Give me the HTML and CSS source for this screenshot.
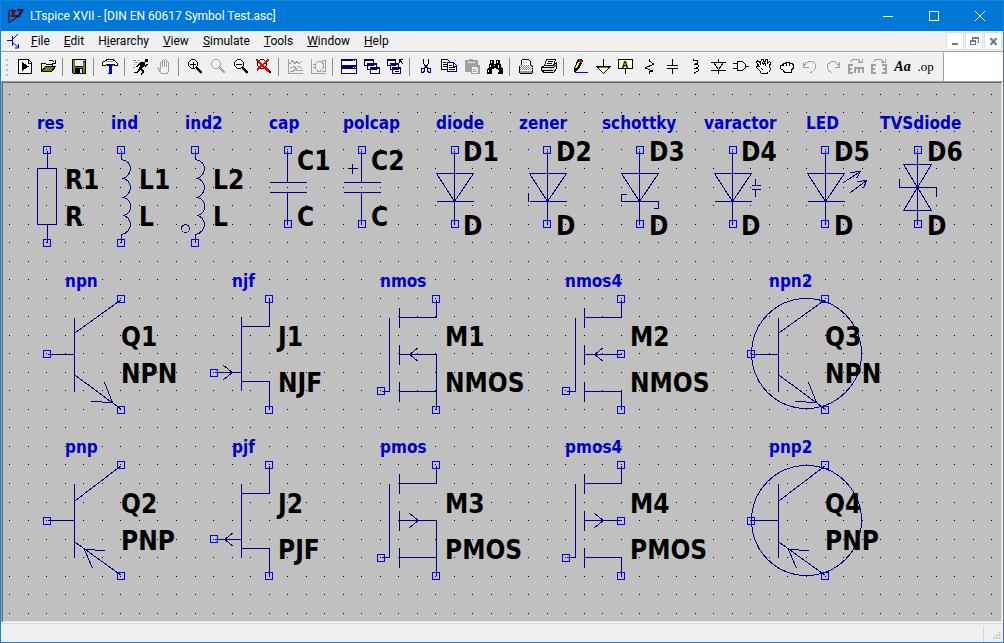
FILE: index.html
```html
<!DOCTYPE html>
<html lang="en">
<head>
<meta charset="utf-8">
<title>LTspice XVII - [DIN EN 60617 Symbol Test.asc]</title>
<link rel="stylesheet" href="styles.css">
</head>
<body>
<div class="window">
  <header class="titlebar">
    <svg class="app-icon" viewBox="0 0 16 16" aria-hidden="true">
      <path d="M1 2v13l9-7" fill="none" stroke="#001" stroke-width="1"/>
      <path d="M1 2l4 0" stroke="#001"/>
      <path d="M3 2h5l-2 5h4v2H3V8l1-2zM9 1h7l-1 2h-1l-2 6h-2l2-6H9z" fill="#700010"/>
      <path d="M8 8l2 1 5-7" fill="none" stroke="#001"/>
    </svg>
    <h1 class="title">LTspice XVII - [DIN EN 60617 Symbol Test.asc]</h1>
    <div class="caption-buttons">
      <button aria-label="Minimize"><svg viewBox="0 0 11 11"><path d="M1 5.500h10"/></svg></button>
      <button aria-label="Maximize"><svg viewBox="0 0 11 11"><path d="M1.500 .5h9v9h-9z"/></svg></button>
      <button aria-label="Close"><svg class="smooth" viewBox="0 0 11 11"><path d="M1 0l10 10M11 0L1 10"/></svg></button>
    </div>
  </header>

  <nav class="menubar" aria-label="Main menu">
    <svg class="doc-icon" viewBox="0 0 16 16" aria-hidden="true"><path d="M1 7.500h5M6.500 3v10M7 6l5-5M7 10l5 4M12.500 11v4H9"/></svg>
    <button><u>F</u>ile</button>
    <button><u>E</u>dit</button>
    <button>H<u>i</u>erarchy</button>
    <button><u>V</u>iew</button>
    <button><u>S</u>imulate</button>
    <button><u>T</u>ools</button>
    <button><u>W</u>indow</button>
    <button><u>H</u>elp</button>
    <div class="child-buttons">
      <button aria-label="Minimize document"><svg viewBox="0 0 16 16"><path d="M5 10h6v2H5z"/></svg></button>
      <button aria-label="Restore document"><svg viewBox="0 0 16 16"><path d="M6 4h7v6h-2V9h1V6H7v1H6zM4 7h6v5H4zM5 9v2h4V9z" fill-rule="evenodd"/></svg></button>
      <button aria-label="Close document"><svg viewBox="0 0 16 16"><path d="M5 5h2l1.500 2L10 5h2v1L10 8.500 12 11v1h-2L8.500 10 7 12H5v-1l2-2.500L5 6z"/></svg></button>
    </div>
  </nav>

  <div class="toolstrip">
    <div class="toolbar" role="toolbar" aria-label="Schematic tools">
      <span class="grip"></span>
      <button aria-label="New schematic"><svg viewBox="0 0 16 16"><path d="M1.500 .5h10l3 3v11h-13z" fill="#fff" stroke="#000"/><path d="M11 1v3h3" fill="none" stroke="#000"/><path d="M5 3l7 4.500L5 12z"/></svg></button>
      <button aria-label="Open"><svg viewBox="0 0 16 16"><path d="M1.500 12.500v-8h4l1 1h6v3" fill="#ffff80" stroke="#000"/><path d="M1.500 12.500l4-5h10l-4 5z" fill="#808000" stroke="#000"/><path d="M9 2l2-1 2 1 1 1M12 4h3V1" fill="none" stroke="#000"/></svg></button>
      <i class="sep"></i>
      <button aria-label="Save"><svg viewBox="0 0 16 16"><path d="M1 0h14v15H2l-1-1z"/><path d="M2 1h2v7h8V3h2v11H2z" fill="#808000"/><path d="M4 1h8v6H4z" fill="#efefef"/><path d="M12 1h2v1h-2z" fill="#ddd"/><path d="M4 9h8v5H4z"/><path d="M9 10h2v4H9z" fill="#efefef"/></svg></button>
      <i class="sep"></i>
      <button aria-label="Control panel"><svg viewBox="0 0 16 16"><path d="M3.500 1.500l2-1h5l2 1 3 3v2h-2l-2-1h-2v1h-4v-1h-1l-1 1h-3v-3z" fill="#fff" stroke="#000"/><path d="M4 2.500h7" stroke="#888"/><path d="M6 5h5v2h-1v8H6v-1h1V7H6z" fill="#000080"/><path d="M8 7h2v7H8z" fill="#00f"/></svg></button>
      <i class="sep"></i>
      <button aria-label="Run"><svg viewBox="0 0 16 16"><path d="M12 0h3v3h-3zM7 3h5v3l2-1h1v1l-3 2-1-1-2 3 2 1v2l-2 3H8l1-4-2-1-3 3H1v-1h3l3-6-1-1-2 2H3l2-3z"/><path d="M0 1h3M2 3h3M1 5h1M0 8h2M5 1h1" stroke="#888"/></svg></button>
      <button aria-label="Halt"><svg viewBox="0 0 16 16"><path class="off" d="M5.500 14.500l-4-5 1-1 2 1.500V3.500l1-1 1 1V8V1.500l1-1 1 1V8V1.500l1-1 1 1V8V3.500l1-1 1 1v8l-1 3z"/></svg></button>
      <i class="sep"></i>
      <button aria-label="Zoom in"><svg viewBox="0 0 16 16"><path class="lens" d="M4.500 .5h3l3 3v3l-3 3h-3l-3-3v-3z"/><path d="M3 5.500h6M6 3v6" stroke="#000"/><path d="M9 8l6 6" stroke="#000" stroke-width="2"/><path d="M9 10l5 5" stroke="#888"/></svg></button>
      <button aria-label="Pan"><svg viewBox="0 0 16 16"><path class="off" d="M4.500 .5h3l3 3v3l-3 3h-3l-3-3v-3z"/><path d="M9 8l6 6" stroke="#a0a0a0" stroke-width="2"/></svg></button>
      <button aria-label="Zoom out"><svg viewBox="0 0 16 16"><path class="lens" d="M4.500 .5h3l3 3v3l-3 3h-3l-3-3v-3z"/><path d="M3 5.500h6" stroke="#000"/><path d="M9 8l6 6" stroke="#000" stroke-width="2"/><path d="M9 10l5 5" stroke="#888"/></svg></button>
      <button aria-label="Zoom to fit"><svg viewBox="0 0 16 16"><path class="lens" d="M4.500 .5h3l3 3v3l-3 3h-3l-3-3v-3z"/><path d="M9 8l6 6" stroke="#000" stroke-width="2"/><path d="M0 0l13 13M13 0L1 11" stroke="#f00" stroke-width="2"/></svg></button>
      <i class="sep"></i>
      <button aria-label="Autorange"><svg viewBox="0 0 16 16"><path class="off" d="M1.500 0v14.500H16M1 4.500h2l2-3 3 3 2-2 2 2 3-2M3 8.500h2l2-1 2 2 3-2 3 2M3 12.500h3l2-2 3 1h5"/></svg></button>
      <button aria-label="Plot limits"><svg viewBox="0 0 16 16"><path class="off" d="M1.500 0v14.500H16M5.500 5l2-3h3l3 3v3l-3 4h-3l-2-3zM3 5.500h3M3 8.500h3M12 1.500h3.500v11H12"/></svg></button>
      <i class="sep"></i>
      <button aria-label="Tile"><svg viewBox="0 0 16 16"><g class="win"><path d="M.5 .5h15v6H.5zM.5 8.500h15v6H.5z"/></g><path d="M0 0h16v2H0zM0 7h16v3H0z" fill="#000080"/><path d="M12 1h1v1h-1zM14 1h1v1h-1zM12 8h1v1h-1zM14 8h1v1h-1z" fill="#fff"/></svg></button>
      <button aria-label="Cascade"><svg viewBox="0 0 16 16"><g class="win"><path d="M.5 .5h9v6h-9zM3.500 4.500h9v6h-9zM6.500 8.500h9v6h-9z"/></g><path d="M0 0h10v2H0zM3 4h10v2H3zM6 8h10v2H6z" fill="#000080"/></svg></button>
      <button aria-label="Close all"><svg viewBox="0 0 16 16"><g class="win"><path d="M.5 .5h8v6h-8zM3.500 4.500h8v6h-8zM5.500 8.500h8v6h-8z"/></g><path d="M0 0h9v2H0zM3 4h9v2H3zM5 8h9v2H5zM8 12h4v1H8z" fill="#000080"/><path d="M12 .5h4M12.500 0v4M12 0l4 5" fill="none" stroke="#000"/></svg></button>
      <i class="sep"></i>
      <button aria-label="Cut"><svg viewBox="0 0 16 16"><path d="M5.500 0v4l3 5M10.500 0v4l-3 5" fill="none" stroke="#000"/><path d="M7 8l-1.500 1.500h-2v4h2l1-2V9M9 8l1.500 1.500h2v4h-2l-1-2V9" fill="none" stroke="#000080"/></svg></button>
      <button aria-label="Copy"><svg viewBox="0 0 16 16"><path d="M.5 .5h6l2 2v8h-8z" fill="#fff" stroke="#000"/><path d="M2 3.500h3M2 5.500h4M2 7.500h4" stroke="#000"/><path d="M6.500 3.500h6l3 3v6h-9z" fill="#fff" stroke="#000080"/><path d="M8 6.500h3M8 8.500h6M8 10.500h6M12 4v3h3" fill="none" stroke="#000080"/></svg></button>
      <button aria-label="Paste"><svg viewBox="0 0 16 16"><path d="M1 1h4V0h4v1h5v5h2v9H7v-2H1z" fill="#a0a0a0"/><path d="M8 8h5v1h1v5H8z" fill="#efefef"/><path d="M4 3.500h7" stroke="#efefef"/><path d="M9 10.500h3M9 12.500h4" stroke="#a0a0a0"/></svg></button>
      <button aria-label="Find"><svg viewBox="0 0 16 16"><path d="M3 1h4v4h2V1h4v3l1 2v2l2 2v5h-5v-5H9V9H7v1H5v5H0v-5l2-2V6l1-2z"/><path d="M4.500 2v2M3.500 6v2M1.500 11v2M10.500 2v2M11.500 6v3M7.500 6v1M11.500 11v2" stroke="#fff"/></svg></button>
      <i class="sep"></i>
      <button aria-label="Print preview"><svg viewBox="0 0 16 16"><path d="M3.500 5.500v-4l1-1h6l2 2v3l2 2v5l-1 2h-11l-1-2v-5z" fill="#fff" stroke="#000"/><path d="M5 3.500h1M8 3.500h1" stroke="#888"/><path d="M2 6.500h13M2 8.500h13M2 10.500h13" stroke="#888" stroke-dasharray="1 1"/><path d="M3 7.500h11M3 9.500h11" stroke="#888" stroke-dasharray="1 1"/><path d="M2 12h12v2H2z" fill="#999"/></svg></button>
      <button aria-label="Print"><svg viewBox="0 0 16 16"><path d="M5.500 .5h9l-2 6h-9z" fill="#fff" stroke="#000"/><path d="M7 2.500h5M6 4.500h5" stroke="#000"/><path d="M.5 8.500l3-2h9l3-3v6l-3 4H3l-2.500-2z" fill="#ddd" stroke="#000"/><path d="M1 8.500h11M12 9l3-3M1 11.500h11" stroke="#000"/><path d="M9 10.500h2" stroke="#dd0"/></svg></button>
      <i class="sep"></i>
      <button aria-label="Wire"><svg viewBox="0 0 16 16"><path d="M6 0h3l2 2-4 8-4 3H2V9z"/><path d="M7 3L4 9" stroke="#ff0" stroke-width="2"/><path d="M7 1l3 2" stroke="#f00" stroke-width="2"/><path d="M3 13.500h13" stroke="#00f"/></svg></button>
      <button aria-label="Ground"><svg viewBox="0 0 16 16"><path d="M2.500 8.500h12l-6 6z" fill="#ffffd0" stroke="#000"/><path d="M8.500 0v8M1 7.500h15" stroke="#000"/><path d="M4 8.500h9" stroke="#808000"/></svg></button>
      <button aria-label="Label net"><svg viewBox="0 0 16 16"><path d="M.5 .5h14v9H.5z" fill="#ffffc0" stroke="#000"/><path d="M7.500 10v5" stroke="#000"/><text x="4" y="9" class="net-label">A</text></svg></button>
      <button aria-label="Resistor"><svg viewBox="0 0 16 16"><path class="ink" d="M8 0v2l5 3-9 4 8 3-4 1v2"/></svg></button>
      <button aria-label="Capacitor"><svg viewBox="0 0 16 16"><path class="ink" d="M8.500 0v6M3 6.500h11M3 9.500h11M8.500 10v5"/></svg></button>
      <button aria-label="Inductor"><svg viewBox="0 0 16 16"><path class="ink" d="M6.500 0v1h2l2 1v2l-2 1H7h2l2 1v2l-2 1H7h2l2 1v2l-2 1h-2v2"/></svg></button>
      <button aria-label="Diode"><svg viewBox="0 0 16 16"><path d="M3.500 3.500h10l-5 7z" fill="#e8e8d0" stroke="#000"/><path class="ink" d="M8.500 0v3M1 3.500h15M1 11.500h15M8.500 11v4"/></svg></button>
      <button aria-label="Component"><svg viewBox="0 0 16 16"><path class="ink" d="M4.500 2.500h5l3 3v3l-3 3h-5zM0 4.500h4M0 9.500h4M12 7.500h4"/></svg></button>
      <button aria-label="Move"><svg viewBox="0 0 16 16"><path class="hand" d="M5.500 14.500l-2-3-3-3 1-2 2 1-3-4 1-2 3 2 1-3h2l1 4 1-4h2l0 4 2-2 1 1-1 4 1 3-2 3-2 1z"/><path class="ink" d="M3.500 3.500l2 3M6.500 3l1 3M9.500 3.500v3M5 9l2 2"/></svg></button>
      <button aria-label="Drag"><svg viewBox="0 0 16 16"><path class="hand" d="M5.500 13.500l-1-2-3-2V7l2-1 1-2h2l1-1h2l1 1h2l2 2v3l-2 2v2.500z"/><path class="ink" d="M4.500 4v3M7.500 4v3M10.500 4v3"/></svg></button>
      <button aria-label="Undo"><svg viewBox="0 0 16 16"><path class="off" d="M1.500 3v5h5M1.500 7.500l3-4 3-1h3l3 3v4l-3 3-2 1"/></svg></button>
      <button aria-label="Redo"><svg viewBox="0 0 16 16"><path class="off" d="M14.500 3v5h-5M14.500 7.500l-3-4-3-1h-2l-4 3v4l2 3 3 1"/></svg></button>
      <button aria-label="Rotate"><svg viewBox="0 0 16 16"><path class="off2" d="M5 6H1v8h4M1 10h3M7 14V9h9M11 9v5M15 9v5"/><path class="off" d="M2 3l3-2.500h5l3 3M10 3.500h4V0"/></svg></button>
      <button aria-label="Mirror"><svg viewBox="0 0 16 16"><path class="off2" d="M5 6H1v8h4M1 10h3M11 6h4v8h-4M12 10h3"/><path class="off" d="M2 3l3-2.500h5l3 3M10 3.500h4V0"/></svg></button>
      <button class="text-tool" aria-label="Text">Aa</button>
      <button class="op-tool" aria-label="SPICE directive">.op</button>
    </div>
  </div>

  <main class="sheet">
    <svg class="schematic" role="img" aria-label="Symbol test schematic">
      <defs>
        <g id="pin"><path class="pin" d="M-4-4h7v7h-7z"/></g>
        <g id="diode"><path d="M0 0V74M-18 23h37L0 51zM-18 51h37M-1 49h2M-1 50h2"/></g>
        <g id="coil"><path d="M0 0v9C6 10 9 14 9 18S6 27 1 28C6 28 9 33 9 37S6 46 1 47C6 47 9 51 9 56S6 65 1 65C6 65 9 70 9 74S6 83 0 84v8"/></g>
        <g id="npn"><path d="M0 55h27M27 18v74M28 33L74 0M28 76l46 34M65 103l-21-1M65 103l-8-20"/></g>
        <g id="pnp"><path d="M0 55h27M27 18v74M28 35L74 0M28 77l46 33M37 84l21 1M37 84l8 19"/></g>
        <g id="jfet"><path d="M27 18v74M27 28h28V0M27 83h28v27M0 74h27"/></g>
        <g id="mos"><path d="M18 8v20M18 45v20M18 82v20M18 18h37V0M18 55h37M18 92h37v18"/></g>
      </defs>
      <g transform="translate(-3 -83)">
        <path id="grid" class="grid"/>
        <g class="symbols" transform="translate(.5 .5)">
          <path d="M47 150v18M37 168h19v56H37zM47 224v18"/>
          <use href="#coil" x="121" y="150"/>
          <use href="#coil" x="195" y="150"/><circle cx="185" cy="228" r="4"/>
          <path d="M287 150v32M269 182h37M269 192h37M287 192v32"/>
          <path d="M361 150v32M343 182h37M343 192h37M361 192v32M347 168h10M352 163v10"/>
          <use href="#diode" x="454" y="150"/>
          <use href="#diode" x="547" y="150"/><path d="M528 192v9"/>
          <use href="#diode" x="639" y="150"/><path d="M626 194h-5v7M658 201v7h-5"/>
          <use href="#diode" x="732" y="150"/><path d="M751 185h9M751 189h9M755 178v7M755 189v7"/>
          <use href="#diode" x="825" y="150"/><path d="M843 182l17-11M850 172l10-1-4 7M850 192l16-12M857 181l9-1-3 8"/>
          <path d="M917 150v74M903 164h28l-28 46h28zM899 178v9h37v9M916 186h2M916 188h2"/>
          <use href="#npn" x="47" y="299"/>
          <use href="#jfet" x="214" y="298"/><path d="M223 365l9 7-9 7"/>
          <use href="#mos" x="381" y="299"/><path d="M381 391h8V317M436 354v38M418 347l-9 7 9 7"/>
          <use href="#mos" x="566" y="299"/><path d="M566 391h9V317M603 347l-9 7 9 7"/>
          <use href="#npn" x="751" y="299"/><circle cx="806" cy="353" r="55"/>
          <use href="#pnp" x="47" y="465"/>
          <use href="#jfet" x="214" y="465"/><path d="M233 532l-9 7 9 7"/>
          <use href="#mos" x="381" y="465"/><path d="M381 557h8V483M436 520v38M409 513l9 7-9 7"/>
          <use href="#mos" x="566" y="465"/><path d="M566 557h9V483M594 513l9 7-9 7"/>
          <use href="#pnp" x="751" y="465"/><circle cx="806" cy="520" r="55"/>
        </g>
        <g class="symbols" transform="translate(.5 .5)">
          <use href="#pin" x="47" y="150"/><use href="#pin" x="47" y="243"/>
          <use href="#pin" x="121" y="150"/><use href="#pin" x="121" y="243"/>
          <use href="#pin" x="195" y="150"/><use href="#pin" x="195" y="243"/>
          <use href="#pin" x="288" y="150"/><use href="#pin" x="288" y="224"/>
          <use href="#pin" x="362" y="150"/><use href="#pin" x="362" y="224"/>
          <use href="#pin" x="455" y="150"/><use href="#pin" x="455" y="224"/>
          <use href="#pin" x="547" y="150"/><use href="#pin" x="547" y="224"/>
          <use href="#pin" x="640" y="150"/><use href="#pin" x="640" y="224"/>
          <use href="#pin" x="733" y="150"/><use href="#pin" x="733" y="224"/>
          <use href="#pin" x="825" y="150"/><use href="#pin" x="825" y="224"/>
          <use href="#pin" x="918" y="150"/><use href="#pin" x="918" y="224"/>
          <use href="#pin" x="121" y="299"/><use href="#pin" x="47" y="354"/><use href="#pin" x="121" y="410"/>
          <use href="#pin" x="269" y="299"/><use href="#pin" x="214" y="373"/><use href="#pin" x="269" y="410"/>
          <use href="#pin" x="436" y="299"/><use href="#pin" x="381" y="391"/><use href="#pin" x="436" y="410"/>
          <use href="#pin" x="621" y="299"/><use href="#pin" x="621" y="354"/><use href="#pin" x="566" y="391"/><use href="#pin" x="621" y="410"/>
          <use href="#pin" x="825" y="299"/><use href="#pin" x="751" y="354"/><use href="#pin" x="825" y="410"/>
          <use href="#pin" x="121" y="465"/><use href="#pin" x="47" y="521"/><use href="#pin" x="121" y="576"/>
          <use href="#pin" x="269" y="465"/><use href="#pin" x="214" y="539"/><use href="#pin" x="269" y="576"/>
          <use href="#pin" x="436" y="465"/><use href="#pin" x="381" y="558"/><use href="#pin" x="436" y="576"/>
          <use href="#pin" x="621" y="465"/><use href="#pin" x="621" y="521"/><use href="#pin" x="566" y="558"/><use href="#pin" x="621" y="576"/>
          <use href="#pin" x="825" y="465"/><use href="#pin" x="751" y="521"/><use href="#pin" x="825" y="576"/>
        </g>
        <g class="kind">
          <text x="37" y="129">res</text><text x="111" y="129">ind</text><text x="185" y="129">ind2</text>
          <text x="269" y="129">cap</text><text x="343" y="129">polcap</text><text x="436" y="129">diode</text>
          <text x="519" y="129">zener</text><text x="602" y="129">schottky</text><text x="704" y="129">varactor</text>
          <text x="806" y="129">LED</text><text x="880" y="129">TVSdiode</text>
          <text x="65" y="287">npn</text><text x="232" y="287">njf</text><text x="380" y="287">nmos</text>
          <text x="565" y="287">nmos4</text><text x="769" y="287">npn2</text>
          <text x="65" y="453">pnp</text><text x="232" y="453">pjf</text><text x="380" y="453">pmos</text>
          <text x="565" y="453">pmos4</text><text x="769" y="453">pnp2</text>
        </g>
        <g class="value">
          <text x="65" y="189">R1</text><text x="65" y="226">R</text>
          <text x="139" y="189">L1</text><text x="139" y="226">L</text>
          <text x="213" y="189">L2</text><text x="213" y="226">L</text>
          <text x="297" y="170">C1</text><text x="297" y="226">C</text>
          <text x="371" y="170">C2</text><text x="371" y="226">C</text>
          <text x="463" y="161">D1</text><text x="463" y="235">D</text>
          <text x="556" y="161">D2</text><text x="556" y="235">D</text>
          <text x="649" y="161">D3</text><text x="649" y="235">D</text>
          <text x="741" y="161">D4</text><text x="741" y="235">D</text>
          <text x="834" y="161">D5</text><text x="834" y="235">D</text>
          <text x="927" y="161">D6</text><text x="927" y="235">D</text>
          <text x="121" y="346">Q1</text><text x="121" y="383">NPN</text>
          <text x="278" y="346">J1</text><text x="278" y="392">NJF</text>
          <text x="445" y="346">M1</text><text x="445" y="392">NMOS</text>
          <text x="630" y="346">M2</text><text x="630" y="392">NMOS</text>
          <text x="825" y="346">Q3</text><text x="825" y="383">NPN</text>
          <text x="121" y="513">Q2</text><text x="121" y="550">PNP</text>
          <text x="278" y="513">J2</text><text x="278" y="559">PJF</text>
          <text x="445" y="513">M3</text><text x="445" y="559">PMOS</text>
          <text x="630" y="513">M4</text><text x="630" y="559">PMOS</text>
          <text x="825" y="513">Q4</text><text x="825" y="550">PNP</text>
        </g>
      </g>
    </svg>
  </main>

  <footer class="statusbar">
    <svg class="size-grip" viewBox="0 0 12 12" aria-hidden="true"><path d="M7 1h2v2H7zM4 4h2v2H4zM7 4h2v2H7zM1 7h2v2H1zM4 7h2v2H4zM7 7h2v2H7z"/></svg>
  </footer>
</div>
<script src="grid.js"></script>
</body>
</html>
```
FILE: styles.css
```css
* { box-sizing: border-box; }
body {
  margin: 0;
  font-family: Roboto, "Open Sans", sans-serif;
  font-size: 12px;
  color: #000;
}
button {
  margin: 0;
  padding: 0;
  border: 0;
  background: none;
  font: inherit;
  color: inherit;
}
svg { display: block; }

.window {
  display: flex;
  flex-direction: column;
  height: 100vh;
  border: 1px solid #1883d7;
  background: #f0f0f0;
}

.titlebar {
  display: flex;
  align-items: center;
  height: 30px;
  padding: 0 1px 0 7px;
  background: #0078d7;
  color: #fff;
}
.app-icon { width: 16px; height: 16px; }
.title {
  flex: 1;
  margin: 0 0 0 6px;
  font-size: 12px;
  font-weight: 400;
  line-height: 16px;
  white-space: nowrap;
}
.caption-buttons { display: flex; height: 100%; }
.caption-buttons button {
  display: flex;
  align-items: center;
  justify-content: center;
  width: 46px;
}
.caption-buttons svg {
  width: 11px;
  height: 11px;
  fill: none;
  stroke: #fff;
  shape-rendering: crispEdges;
}
.caption-buttons svg.smooth { shape-rendering: auto; }

.menubar {
  display: flex;
  align-items: center;
  height: 20px;
  padding: 0 1px 0 5px;
  line-height: 18px;
}
.menubar > button { padding: 0 7px; white-space: nowrap; }
.doc-icon {
  width: 16px;
  height: 16px;
  margin-right: 2px;
  fill: none;
  stroke: #00f;
}
.child-buttons { display: flex; gap: 1px; margin-left: auto; }
.child-buttons button {
  width: 18px;
  height: 18px;
  border: 1px solid #e0e0e0;
  background: #fff;
}
.child-buttons svg { width: 16px; height: 16px; fill: #6d7a88; }

.toolstrip {
  display: flex;
  height: 30px;
  border-top: 1px solid #a0a0a0;
  background: #fff;
}
.toolbar {
  display: flex;
  align-items: center;
  padding: 0 6px 0 5px;
  border-top: 1px solid #fff;
  border-right: 1px solid #a0a0a0;
  background: #f0f0f0;
}
.grip {
  width: 2px;
  height: 17px;
  margin-right: 6px;
  background: repeating-linear-gradient(#bbb 0 2px, transparent 2px 5px);
}
.toolbar button { width: 23px; padding: 0 4px 0 3px; white-space: nowrap; }
.toolbar svg { width: 16px; height: 16px; shape-rendering: crispEdges; }
.sep {
  width: 8px;
  height: 18px;
  background: linear-gradient(#8c8c8c, #8c8c8c) 2px 0 / 1px 100% no-repeat;
}
.ink { fill: none; stroke: #000; }
.hand { fill: #fff; stroke: #000; }
.off { fill: none; stroke: #a0a0a0; }
.off2 { fill: none; stroke: #a0a0a0; stroke-width: 2px; }
.lens { fill: #dff; stroke: #000; }
.win { fill: #fff; stroke: #000080; }
.net-label { font: bold 10px "Liberation Mono", monospace; }
.toolbar .text-tool { padding: 0; font: italic bold 14px "Liberation Serif", serif; }
.toolbar .op-tool { padding: 0; font: 13px "Liberation Serif", serif; }

.sheet {
  flex: 1;
  min-height: 0;
  border: 1px solid;
  border-color: #a0a0a0 #fff #fff #a0a0a0;
}
.schematic {
  width: 100%;
  height: 100%;
  border: 1px solid;
  border-color: #696969 #e3e3e3 #e3e3e3 #696969;
  background: #c0c0c0;
}
.symbols {
  fill: none;
  stroke: #000080;
  shape-rendering: crispEdges;
}
.pin { stroke: #00f; }
.grid { fill: #000; shape-rendering: crispEdges; }
.kind, .value {
  font-family: "DejaVu Sans Condensed", "DejaVu Sans", sans-serif;
  font-weight: 700;
}
.kind { font-size: 17px; fill: #0000c8; }
.value { font-size: 26px; fill: #000; }

.statusbar {
  display: flex;
  justify-content: flex-end;
  align-items: flex-end;
  height: 19px;
  border-top: 1px solid #d7d7d7;
}
.size-grip {
  width: 20px;
  height: 16px;
  padding: 4px 0 0 8px;
  border-left: 1px solid #d7d7d7;
  fill: #bfbfbf;
}
```
FILE: grid.js
```js
// Fills the sheet with grid dots, one every 18.53 px, snapped to whole pixels.
const PITCH = 18.53;
const grid = document.getElementById("grid");
function drawGrid() {
  const box = document.querySelector(".schematic").getBoundingClientRect();
  let d = "";
  for (let y = 94.4; y < box.bottom; y += PITCH) {
    for (let x = 9.7; x < box.right; x += PITCH) {
      d += `M${Math.floor(x)} ${Math.floor(y)}h1v1h-1z`;
    }
  }
  grid.setAttribute("d", d);
}
drawGrid();
addEventListener("resize", drawGrid);
```
